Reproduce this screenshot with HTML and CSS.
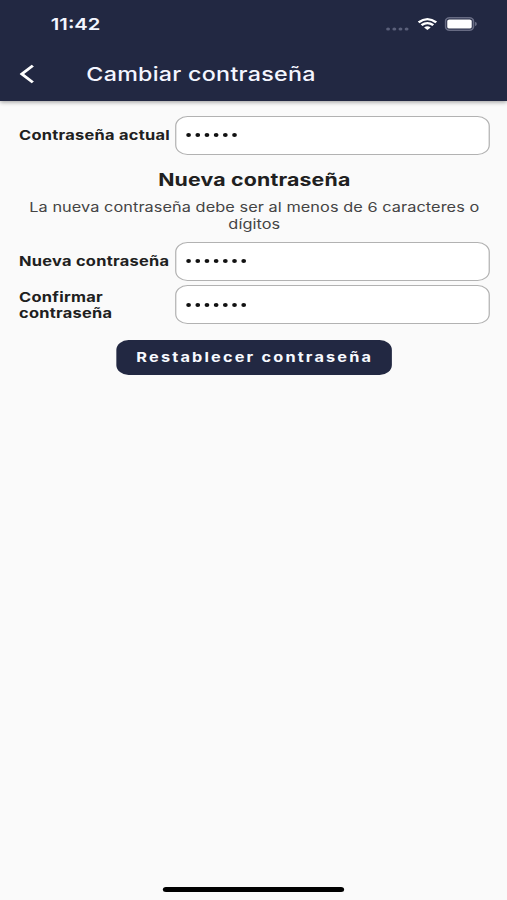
FILE: index.html
```html
<!DOCTYPE html>
<html lang="es">
<head>
<meta charset="utf-8">
<title>Cambiar contraseña</title>
<link rel="stylesheet" href="styles.css">
</head>
<body>
<div class="screen">
  <header class="top">
    <div class="status">
      <span class="time">11:42</span>
      <div class="signals">
        <svg class="dots" width="19" height="4" viewBox="0 0 19 4"><g fill="#5b607a"><circle cx="1.9" cy="2" r="1.6"/><circle cx="7" cy="2" r="1.6"/><circle cx="12" cy="2" r="1.6"/><circle cx="17" cy="2" r="1.6"/></g></svg>
        <svg class="wifi" width="16" height="12" viewBox="0 0 16 12"><g fill="none" stroke="#fff" stroke-width="2.2"><path d="M.8 4.4Q8-2 15.2 4.4"/><path d="M3.2 7.2Q8 3 12.8 7.2"/></g><path d="M5.3 9.4Q8 7.2 10.7 9.4L8 12Z" fill="#fff"/></svg>
        <svg class="battery" width="27" height="14" viewBox="0 0 27 14"><rect x=".8" y=".8" width="22.8" height="12.4" rx="3.4" fill="none" stroke="#676b83" stroke-width="1.4"/><rect x="2.2" y="2.4" width="20" height="9.2" rx="1.6" fill="#fff"/><path d="M24.8 4.8q1.6.6 1.6 2.2t-1.6 2.2z" fill="#676b83"/></svg>
      </div>
    </div>
    <div class="nav">
      <svg class="back" width="12" height="20" viewBox="0 0 12 20"><path d="M10.8 1.6 1.8 10l9 8.4" fill="none" stroke="#fff" stroke-width="2.6"/></svg>
      <h1 class="title">Cambiar contraseña</h1>
    </div>
  </header>
  <main class="form">
    <div class="row">
      <label class="label current">Contraseña actual</label>
      <div class="field"><svg width="50" height="6" viewBox="0 0 50 6"><path class="bullets" d="M3 3h37.6"/></svg></div>
    </div>
    <h2 class="heading">Nueva contraseña</h2>
    <p class="hint">La nueva contraseña debe ser al menos de 6 caracteres o<br>dígitos</p>
    <div class="row">
      <label class="label">Nueva contraseña</label>
      <div class="field"><svg width="60" height="6" viewBox="0 0 60 6"><path class="bullets" d="M3 3h45.1"/></svg></div>
    </div>
    <div class="row last">
      <label class="label">Confirmar<br>contraseña</label>
      <div class="field"><svg width="60" height="6" viewBox="0 0 60 6"><path class="bullets" d="M3 3h45.1"/></svg></div>
    </div>
    <button class="submit"><span>Restablecer contraseña</span></button>
  </main>
  <div class="home"></div>
</div>
</body>
</html>
```

FILE: styles.css
```css
* { box-sizing: border-box; }
html { overflow: hidden; background: #fafafa; }
body { margin: 0; width: 507px; height: 900px; overflow: hidden; }
/* 414-unit layout widened to fill the viewport */
.screen {
  width: 414px; height: 900px; display: flex; flex-direction: column;
  transform: scaleX(1.22464); transform-origin: 0 0;
  background: #fafafa; color: #202020;
  font-family: Inter, "Liberation Sans", sans-serif;
}
svg { display: block; flex: none; }
.top { height: 100.5px; flex: none; background: #222842; color: #f4f6ff; box-shadow: 0 1px 4px rgba(0,0,0,.4); }
.status { height: 48px; display: flex; justify-content: space-between; padding: 0 24px 0 41.5px; }
.time { font-size: 16.5px; line-height: 20px; font-weight: 600; margin-top: 14px; white-space: nowrap; }
.signals { display: flex; }
.dots { margin: 26.5px 1.5px 0 0; }
.wifi { margin: 18px 0 0 5px; }
.battery { margin: 17.3px 0 0 6.5px; }
.nav { height: 52px; display: flex; align-items: center; padding-left: 16px; }
.title { margin: 1px 0 0 42.5px; font-size: 19px; line-height: 25px; font-weight: 500; letter-spacing: .22px; white-space: nowrap; }
.form { padding: 15px 14.2px 0 15.5px; flex: 1; display: flex; flex-direction: column; }
.row { display: flex; align-items: center; height: 39px; }
.label { width: 127.8px; flex: none; padding-top: 1px; font-size: 13.4px; line-height: 16.3px; font-weight: 700; letter-spacing: .23px; white-space: nowrap; }
.current { padding-top: 0; }
.field { flex: 1; height: 39px; border: 1px solid #b2b2b2; border-radius: 10px; background: #fff; display: flex; align-items: center; padding-left: 6.3px; }
.bullets { fill: none; stroke: #111; stroke-width: 3.9; stroke-linecap: round; stroke-dasharray: 0 7.5; }
.heading { margin: 14px 0 0; font-size: 17.4px; line-height: 22px; font-weight: 700; letter-spacing: .15px; text-align: center; white-space: nowrap; }
.hint { margin: 8.5px -10px 9.5px; font-size: 13.3px; line-height: 16.5px; letter-spacing: .06px; color: #444; text-align: center; white-space: nowrap; }
.last { margin-top: 4.7px; }
.submit { width: 225.5px; height: 35px; margin: 15.5px 0 0 79.3px; padding: 0 0 0 1px; border: 0; border-radius: 10px; background: #222842; color: #f8faff; font: 700 13.3px/16px Inter, sans-serif; letter-spacing: 1.78px; white-space: nowrap; }
.home { width: 148px; height: 5px; border-radius: 3px; background: #000; margin: 0 auto 8px; }
```
